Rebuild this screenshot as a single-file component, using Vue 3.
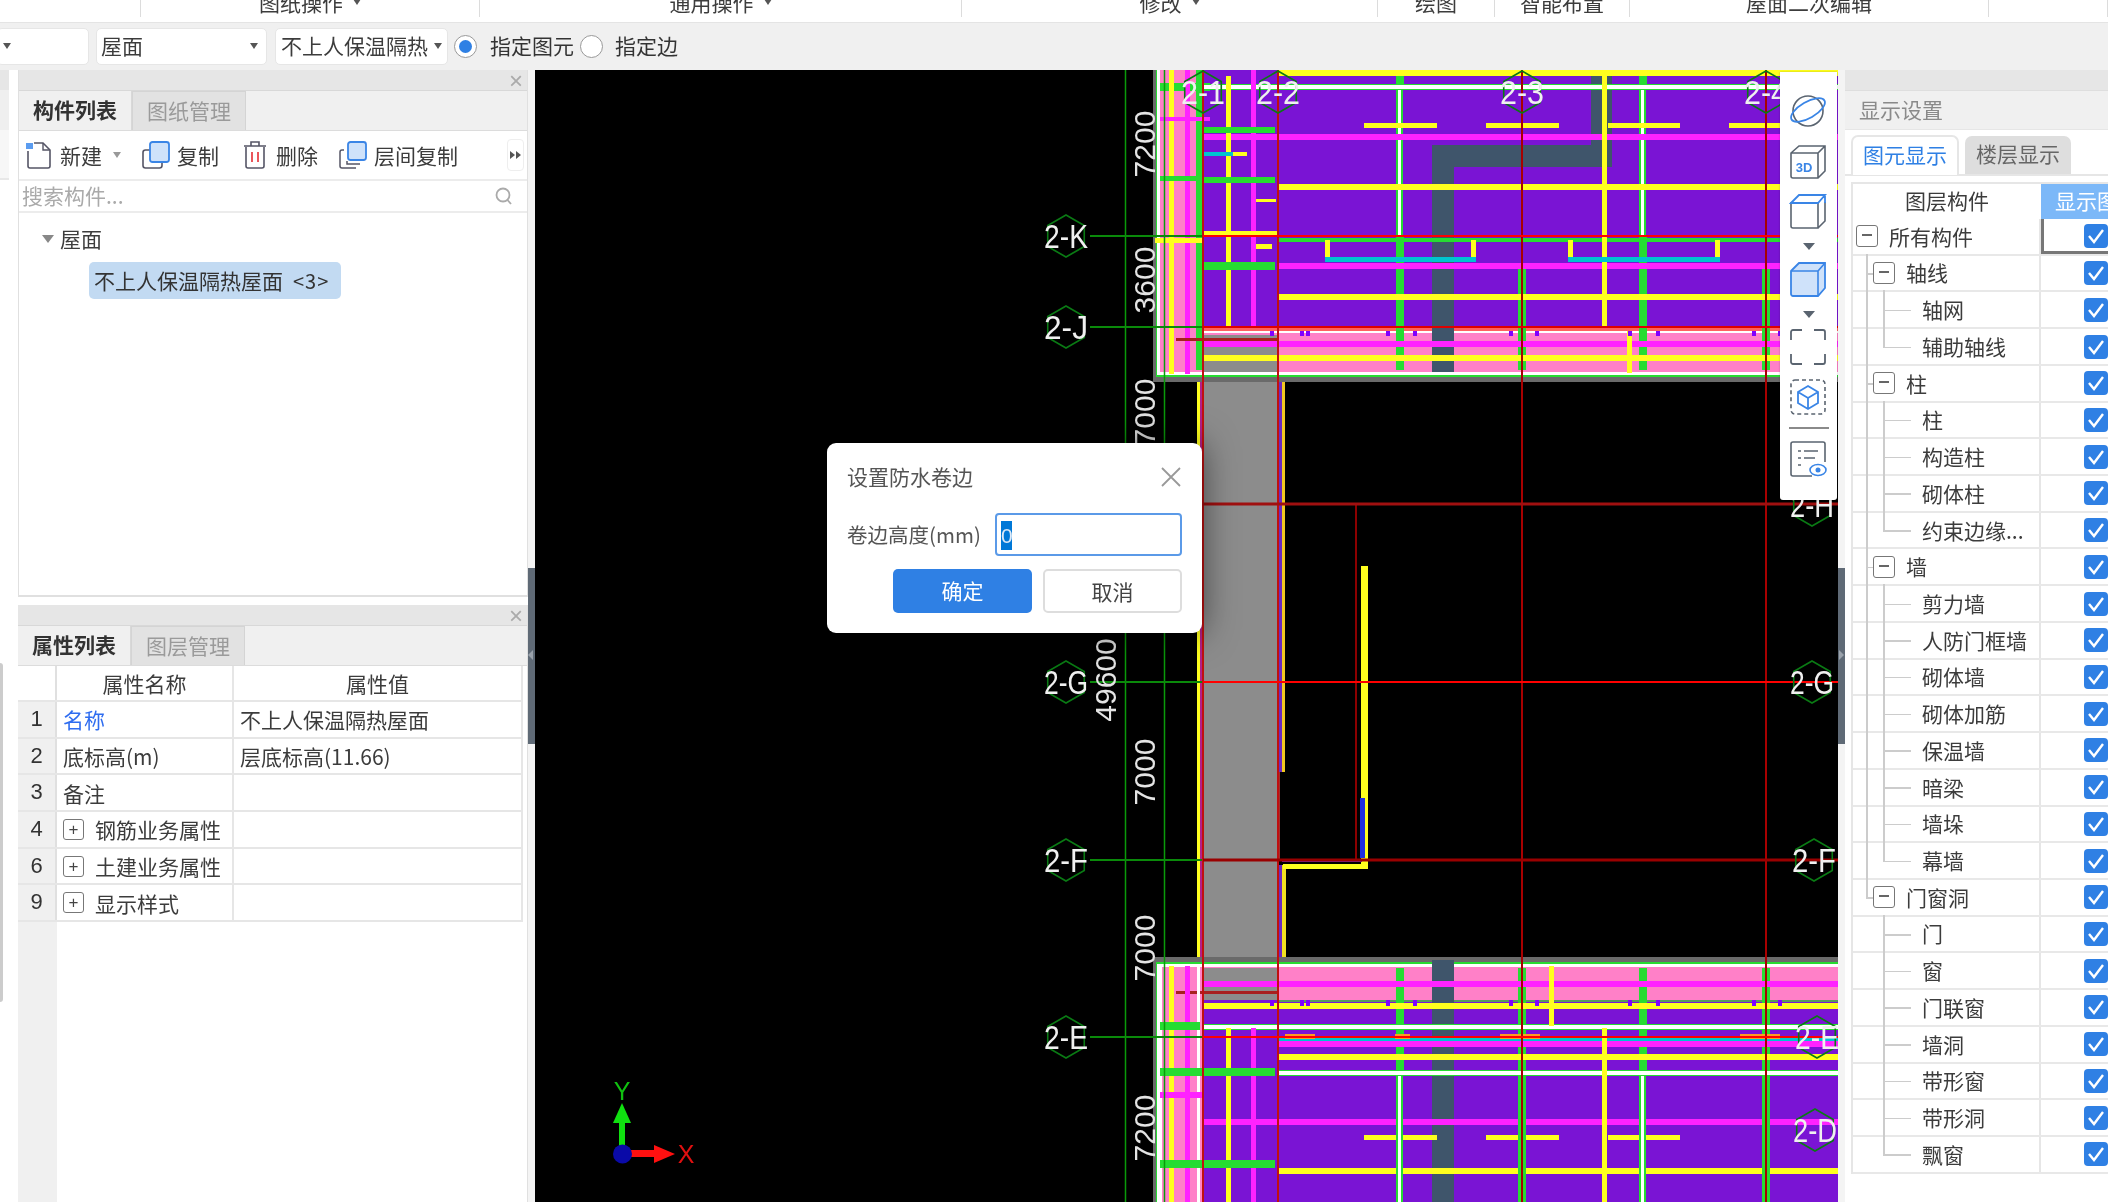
<script setup>
const Y = '#ffff1e', M = '#ff22ff', W = '#ffffff', G = '#26dc32', R = '#d80000', P = '#7a14d4', K = '#ff80c8', S = '#3f556b', A = '#8c8c8c', T = '#00c4d0', V = '#8000ff'

const rects = [
  // grey column between the two blocks
  [1203, 380, 75, 580, A], [1197, 380, 3, 580, Y], [1200, 380, 3, 580, '#b0208c'],
  [1278, 380, 4, 392, '#6a2ac0'], [1282, 380, 3, 392, '#f2c820'], [1278, 772, 2, 88, '#a03030'],
  [1279, 865, 3, 92, '#6a2ac0'], [1282, 865, 4, 92, '#f2e020'],
  // stand-alone wall
  [1355, 504, 2, 356, '#8c0000'], [1361, 566, 7, 300, Y], [1360, 798, 5, 60, '#2030e0'],
  [1283, 864, 85, 5, Y], [1282, 859, 80, 3, '#7030c0'],
  // top block
  [1153, 70, 685, 312, '#6a6a6a'], [1156, 70, 682, 307, G], [1157, 70, 681, 305, W], [1160, 70, 678, 302, K],
  [1203, 70, 635, 257, P], [1278, 70, 560, 6, Y],
  [1203, 327, 635, 4, '#ff6060'], [1203, 331, 635, 2, W], [1203, 335, 75, 37, A],
  [1432, 145, 22, 227, S], [1432, 145, 180, 22, S], [1591, 76, 21, 91, S],
  [1400 - 4, 236, 8, 134, G], [1643 - 4, 236, 8, 134, G], [1396, 76, 8, 10, G], [1639, 76, 8, 10, G],
  [1518, 264, 8, 106, G], [1762, 264, 8, 106, G],
  [1396, 88, 7, 147, G], [1398, 88, 3, 147, W], [1639, 88, 7, 147, G], [1641, 88, 3, 147, W],
  [1160, 83, 50, 8, G], [1203, 84, 635, 6, G], [1203, 85, 635, 4, W],
  [1203, 134, 635, 6, M], [1278, 184, 560, 6, Y], [1278, 294, 560, 6, Y], [1278, 263, 560, 6, M],
  [1203, 341, 635, 6, M], [1203, 355, 635, 6, Y], [1278, 238, 560, 4, G],
  [1602, 76, 5, 252, Y], [1627, 331, 5, 42, Y],
  [1226, 76, 5, 252, Y], [1251, 70, 5, 258, M], [1169, 70, 5, 304, Y], [1185, 70, 5, 304, M], [1196, 70, 7, 300, G],
  [1203, 127, 72, 6, G], [1203, 177, 72, 6, G], [1203, 262, 72, 8, G], [1160, 117, 50, 4, M],
  [1160, 176, 40, 5, G], [1203, 231, 75, 5, Y], [1155, 238, 48, 5, Y], [1203, 152, 30, 4, T], [1233, 152, 14, 4, Y],
  [1256, 199, 20, 3, Y], [1256, 244, 16, 5, Y], [1176, 338, 102, 3, '#a82020'],
  [1364, 123, 73, 5, Y], [1486, 123, 73, 5, Y], [1608, 123, 72, 5, Y], [1729, 123, 60, 5, Y],
  [1325, 257, 151, 5, T], [1568, 257, 152, 5, T],
  [1325, 240, 5, 17, Y], [1471, 240, 5, 17, Y], [1568, 240, 5, 17, Y], [1715, 240, 5, 17, Y],
  // bottom block
  [1153, 957, 685, 245, '#6a6a6a'], [1156, 962, 682, 240, G], [1157, 964, 681, 238, W], [1160, 967, 678, 235, K],
  [1203, 1000, 635, 202, P], [1203, 968, 75, 32, A], [1278, 1000, 560, 2, '#5a9a5a'],
  [1432, 960, 22, 242, S],
  [1396, 968, 8, 104, G], [1639, 968, 8, 104, G], [1518, 968, 8, 104, G], [1762, 968, 8, 104, G],
  [1203, 981, 635, 6, M], [1176, 991, 102, 3, '#a82020'], [1203, 1003, 635, 6, Y],
  [1203, 1024, 635, 6, G], [1203, 1025, 635, 4, W], [1278, 1038, 560, 3, T], [1278, 1041, 560, 6, M],
  [1278, 1054, 560, 6, Y], [1278, 1070, 560, 6, G], [1278, 1071, 560, 4, W],
  [1203, 1119, 635, 6, M], [1278, 1168, 560, 6, Y],
  [1364, 1135, 73, 5, Y], [1486, 1135, 73, 5, Y], [1608, 1135, 72, 5, Y],
  [1396, 1076, 7, 126, G], [1398, 1076, 3, 126, W], [1639, 1076, 7, 126, G], [1641, 1076, 3, 126, W],
  [1518, 1076, 8, 126, G], [1762, 1076, 8, 126, G],
  [1602, 1028, 5, 174, Y], [1549, 966, 5, 60, Y], [1226, 1028, 5, 174, Y], [1251, 1028, 5, 174, M],
  [1169, 966, 5, 236, Y], [1185, 966, 5, 236, M], [1159, 964, 3, 238, W], [1197, 964, 3, 238, W],
  [1160, 1022, 40, 8, G], [1160, 1068, 115, 8, G], [1160, 1160, 115, 8, G], [1160, 1092, 44, 6, M],
  [1285, 1034, 30, 5, '#ff9a20'], [1500, 1034, 40, 5, '#ff9a20'], [1395, 1034, 15, 5, '#ff9a20'], [1740, 1034, 40, 5, '#ff9a20']
]

const marks = [1270, 1300, 1306, 1386, 1413, 1509, 1535, 1628, 1656, 1752, 1778]

const axesV = [
  { x: 1203, c: '#c01010' }, { x: 1278, c: '#c01010' }, { x: 1522, c: '#a80000' }, { x: 1766, c: '#a80000' }
]
const axesH = [
  { y: 236, c: '#ff0000', w: 2 }, { y: 327, c: '#e00000', w: 2 }, { y: 504, c: '#a01010', w: 3 },
  { y: 682, c: '#ff0000', w: 2 }, { y: 860, c: '#9a0000', w: 3 }, { y: 1037, c: '#ff0000', w: 2 }
]
const greens = [236, 327, 504, 682, 860, 1037]

const bubbles = [
  { x: 1203, y: 92, t: '2-1' }, { x: 1278, y: 92, t: '2-2' }, { x: 1522, y: 92, t: '2-3' }, { x: 1766, y: 92, t: '2-4' },
  { x: 1066, y: 236, t: '2-K' }, { x: 1066, y: 327, t: '2-J' }, { x: 1066, y: 682, t: '2-G' }, { x: 1066, y: 860, t: '2-F' }, { x: 1066, y: 1037, t: '2-E' },
  { x: 1812, y: 505, t: '2-H' }, { x: 1812, y: 682, t: '2-G' }, { x: 1814, y: 860, t: '2-F' }, { x: 1817, y: 1037, t: '2-E' }, { x: 1815, y: 1130, t: '2-D' }
]
const hex = (b) => {
  const r = 21
  return [[0, -r], [r * 0.87, -r / 2], [r * 0.87, r / 2], [0, r], [-r * 0.87, r / 2], [-r * 0.87, -r / 2]]
    .map(([a, c]) => `${b.x + a},${b.y + c}`).join(' ')
}
const dims = [
  { x: 1145, y: 144, t: '7200' }, { x: 1145, y: 280, t: '3600' }, { x: 1145, y: 412, t: '7000' },
  { x: 1106, y: 680, t: '49600' }, { x: 1145, y: 772, t: '7000' }, { x: 1145, y: 948, t: '7000' }, { x: 1145, y: 1128, t: '7200' }
]

const ribbon = [
  { w: 141, t: '' }, { w: 339, t: '图纸操作', a: true }, { w: 482, t: '通用操作', a: true }, { w: 416, t: '修改', a: true },
  { w: 117, t: '绘图' }, { w: 135, t: '智能布置' }, { w: 359, t: '屋面二次编辑' }, { w: 119, t: '' }
]

const props = [
  { n: 1, name: '名称', val: '不上人保温隔热屋面', link: true },
  { n: 2, name: '底标高(m)', val: '层底标高(11.66)' },
  { n: 3, name: '备注', val: '' },
  { n: 4, name: '钢筋业务属性', val: '', exp: true },
  { n: 6, name: '土建业务属性', val: '', exp: true },
  { n: 9, name: '显示样式', val: '', exp: true }
]

const raw = [
  [0, '所有构件'], [1, '轴线'], [2, '轴网'], [2, '辅助轴线'], [1, '柱'], [2, '柱'], [2, '构造柱'], [2, '砌体柱'], [2, '约束边缘...'],
  [1, '墙'], [2, '剪力墙'], [2, '人防门框墙'], [2, '砌体墙'], [2, '砌体加筋'], [2, '保温墙'], [2, '暗梁'], [2, '墙垛'], [2, '幕墙'],
  [1, '门窗洞'], [2, '门'], [2, '窗'], [2, '门联窗'], [2, '墙洞'], [2, '带形窗'], [2, '带形洞'], [2, '飘窗']
]
const layers = raw.map(([level, text], i) => {
  const next = raw[i + 1]
  return {
    level, text, i,
    lastLeaf: level === 2 && (!next || next[0] !== 2),
    trunk: i > 0 && i <= 18,
    trunkEnd: i === 18
  }
})
</script>

<template>
  <div class="app">
    <div class="ribbon">
      <div v-for="(g, i) in ribbon" :key="i" class="rgroup" :style="{ width: g.w + 'px' }">
        <span v-if="g.t" class="rlabel">{{ g.t }}<i v-if="g.a" class="caret rcaret"></i></span>
      </div>
    </div>

    <div class="optbar">
      <div class="select s0"><i class="caret"></i></div>
      <div class="select s1"><span>屋面</span><i class="caret"></i></div>
      <div class="select s2"><span>不上人保温隔热</span><i class="caret"></i></div>
      <span class="radio on"></span><span class="rtext">指定图元</span>
      <span class="radio"></span><span class="rtext r2">指定边</span>
    </div>

    <div class="main">
      <div class="stub">
        <div class="stub-top"></div>
        <div class="stub-mid"></div>
        <div class="stub-bar"></div>
      </div>

      <aside class="left">
        <section class="panel top">
          <div class="ptitle"><span class="px">×</span></div>
          <div class="ptabs">
            <span class="ptab active">构件列表</span><span class="ptab">图纸管理</span>
          </div>
          <div class="tools">
            <svg class="ti i-new" width="28" height="28" viewBox="0 0 28 28">
              <path d="M3 10v15a2 2 0 0 0 2 2h18a2 2 0 0 0 2-2V9l-7-7H9" fill="none" stroke="#556" stroke-width="1.6"/>
              <path d="M18 2v7h7" fill="none" stroke="#556" stroke-width="1.4"/>
              <path d="M1 2h7v6H1z" fill="#5b9cf0"/>
            </svg>
            <span class="tt">新建</span><i class="caret tc"></i>
            <svg class="ti i-copy" width="28" height="28" viewBox="0 0 28 28">
              <rect x="1" y="9" width="19" height="18" rx="2.5" fill="none" stroke="#556" stroke-width="1.6"/>
              <rect x="8" y="1" width="19" height="20" rx="2.5" fill="#cfe2fa" stroke="#3a85e6" stroke-width="1.8"/>
            </svg>
            <span class="tt">复制</span>
            <svg class="ti i-del" width="24" height="28" viewBox="0 0 24 28">
              <path d="M3 6v19a2 2 0 0 0 2 2h14a2 2 0 0 0 2-2V6M1 5h22M8 5V1h8v4" fill="none" stroke="#556" stroke-width="1.6"/>
              <path d="M9 11v10M15 11v10" stroke="#e8454a" stroke-width="1.8"/>
            </svg>
            <span class="tt">删除</span>
            <svg class="ti i-lay" width="28" height="28" viewBox="0 0 28 28">
              <path d="M5 9H3a2 2 0 0 0-2 2v14a2 2 0 0 0 2 2h14M8 20v3h13" fill="none" stroke="#556" stroke-width="1.5"/>
              <rect x="9" y="1" width="18" height="18" rx="2.5" fill="#cfe2fa" stroke="#3a85e6" stroke-width="1.8"/>
            </svg>
            <span class="tt">层间复制</span>
            <span class="more"><i></i><i></i></span>
          </div>
          <div class="search">
            <span>搜索构件...</span>
            <svg width="18" height="20" viewBox="0 0 18 20">
              <circle cx="8" cy="9" r="6.5" fill="none" stroke="#aaa" stroke-width="1.8"/>
              <path d="M12.5 14l3.5 4" stroke="#aaa" stroke-width="1.8"/>
            </svg>
          </div>
          <div class="tree">
            <div class="troot"><i class="tarrow"></i><span>屋面</span></div>
            <div class="titem">不上人保温隔热屋面<span class="cnt">&lt;3&gt;</span></div>
          </div>
        </section>

        <section class="panel bottom">
          <div class="ptitle"><span class="px">×</span></div>
          <div class="ptabs">
            <span class="ptab active">属性列表</span><span class="ptab">图层管理</span>
          </div>
          <div class="ptable">
            <div class="prow phead">
              <span class="pnum hnum"></span><span class="pname">属性名称</span><span class="pval">属性值</span>
            </div>
            <div v-for="p in props" :key="p.n" class="prow">
              <span class="pnum">{{ p.n }}</span>
              <span class="pname" :class="{ link: p.link }">
                <i v-if="p.exp" class="pbox">+</i>{{ p.name }}
              </span>
              <span class="pval">{{ p.val }}</span>
            </div>
            <div class="pfill"></div>
          </div>
        </section>
      </aside>

      <div class="split"><span class="grip gl"></span></div>

      <div class="canvas">
        <svg class="draw" width="1303" height="1132" viewBox="535 70 1303 1132">
          <line x1="1125.5" y1="70" x2="1125.5" y2="1202" stroke="#0a9a0a" stroke-width="1.5"/>
          <rect v-for="(r, i) in rects" :key="i" :x="r[0]" :y="r[1]" :width="r[2]" :height="r[3]" :fill="r[4]"/>
          <line x1="1164.5" y1="70" x2="1164.5" y2="1202" stroke="#0a9a0a" stroke-width="1.5"/>
          <line v-for="y in greens" :key="'g' + y" x1="1090" :y1="y" x2="1203" :y2="y" stroke="#0a8a0a" stroke-width="2"/>
          <rect v-for="x in marks" :key="'m' + x" :x="x" y="331" width="4" height="5" :fill="V"/>
          <rect v-for="x in marks" :key="'n' + x" :x="x" y="1000" width="4" height="6" :fill="V"/>
          <line v-for="a in axesV" :key="a.x" :x1="a.x" y1="70" :x2="a.x" y2="1202" :stroke="a.c" stroke-width="2"/>
          <line v-for="a in axesH" :key="a.y" x1="1203" :y1="a.y" x2="1838" :y2="a.y" :stroke="a.c" :stroke-width="a.w"/>
          <polygon v-for="(b, i) in bubbles" :key="'h' + i" :points="hex(b)" fill="none" stroke="#0a7a14" stroke-width="1.6"/>
          <text v-for="(b, i) in bubbles" :key="'t' + i" :x="b.x" :y="b.y + 12" class="bub" text-anchor="middle" textLength="44" lengthAdjust="spacingAndGlyphs">{{ b.t }}</text>
          <text v-for="(d, i) in dims" :key="'d' + i" class="dim" text-anchor="middle" :transform="`translate(${d.x + 10} ${d.y}) rotate(-90)`">{{ d.t }}</text>
          <!-- origin gizmo -->
          <rect x="619" y="1112" width="6" height="36" fill="#10e010"/>
          <polygon points="622,1103 613,1123 631,1123" fill="#10e010"/>
          <rect x="628" y="1150" width="28" height="7" fill="#ff1010"/>
          <polygon points="675,1154 654,1145 654,1163" fill="#ff1010"/>
          <circle cx="622.500" cy="1154" r="9.500" fill="#0a0aa8"/>
          <text x="622" y="1100" class="axl" fill="#10c010" text-anchor="middle">Y</text>
          <text x="686" y="1163" class="axl" fill="#e01010" text-anchor="middle">X</text>
        </svg>

        <div class="ftools">
          <svg width="36" height="36" viewBox="0 0 36 36">
            <circle cx="18" cy="18" r="15" fill="none" stroke="#5a6470" stroke-width="1.6"/>
            <ellipse cx="18" cy="17" rx="19" ry="8" transform="rotate(-30 18 17)" fill="none" stroke="#3a85e6" stroke-width="1.8"/>
          </svg>
          <svg width="36" height="36" viewBox="0 0 36 36">
            <path d="M1 10l8-7h26v25l-7 7H3a2 2 0 0 1-2-2zM1 10h27v25M28 10l7-7" fill="none" stroke="#5a6470" stroke-width="1.6"/>
            <text x="14" y="29" class="t3d">3D</text>
          </svg>
          <svg width="36" height="36" viewBox="0 0 36 36">
            <path d="M1 10h27v25H3a2 2 0 0 1-2-2zM28 35l7-7V9" fill="none" stroke="#5a6470" stroke-width="1.6"/>
            <path d="M1 10l8-8h26l-7 8zM35 3v7" fill="none" stroke="#3a85e6" stroke-width="1.8"/>
          </svg>
          <i class="caret fc"></i>
          <svg width="36" height="36" viewBox="0 0 36 36">
            <path d="M1 10l8-8h26v25l-7 8H3a2 2 0 0 1-2-2z" fill="#cfe2fa" stroke="#3a85e6" stroke-width="1.8"/>
            <path d="M1 10h27v25M28 10l7-8" fill="none" stroke="#3a85e6" stroke-width="1.6"/>
          </svg>
          <i class="caret fc"></i>
          <svg width="36" height="36" viewBox="0 0 36 36">
            <path d="M1 11V3a2 2 0 0 1 2-2h9M24 1h9a2 2 0 0 1 2 2v8M35 25v8a2 2 0 0 1-2 2h-9M12 35H3a2 2 0 0 1-2-2v-8" fill="none" stroke="#5a6470" stroke-width="1.8"/>
          </svg>
          <svg width="36" height="36" viewBox="0 0 36 36">
            <rect x="1" y="1" width="34" height="34" rx="4" fill="none" stroke="#5a6470" stroke-width="1.6" stroke-dasharray="4 3"/>
            <path d="M18 7l10 6v11l-10 6-10-6V13zM8 13l10 6 10-6M18 19v11" fill="none" stroke="#3a85e6" stroke-width="1.8"/>
          </svg>
          <span class="fsep"></span>
          <svg width="36" height="36" viewBox="0 0 36 36">
            <path d="M22 35H3a2 2 0 0 1-2-2V3a2 2 0 0 1 2-2h30a2 2 0 0 1 2 2v18" fill="none" stroke="#5a6470" stroke-width="1.6"/>
            <path d="M8 10h3M14 10h14M8 17h3M14 17h11M8 24h3" stroke="#5a6470" stroke-width="1.6"/>
            <ellipse cx="28" cy="29" rx="8" ry="5.500" fill="#fff" stroke="#3a85e6" stroke-width="1.6"/>
            <circle cx="28" cy="29" r="2.500" fill="#3a85e6"/>
          </svg>
        </div>
      </div>

      <div class="split r"><span class="grip gr"></span></div>

      <aside class="right">
        <div class="ptitle rt"></div>
        <div class="rhead">显示设置</div>
        <div class="rtabs">
          <span class="rtab active">图元显示</span><span class="rtab">楼层显示</span>
        </div>
        <div class="ltable">
          <div class="lhead"><span class="lh1">图层构件</span><span class="lh2">显示图元</span></div>
          <div v-for="l in layers" :key="l.i" class="lrow">
            <div class="lname" :class="'lv' + l.level">
              <span v-if="l.trunk" class="g0" :class="{ end: l.trunkEnd }"></span>
              <span v-if="l.level === 1" class="tick1"></span>
              <span v-if="l.level === 2" class="g1" :class="{ end: l.lastLeaf }"></span>
              <span v-if="l.level === 2" class="tick2"></span>
              <i v-if="l.level < 2" class="minus"></i>
              <span class="ltext">{{ l.text }}</span>
            </div>
            <div class="lchk" :class="{ focus: l.i === 0 }">
              <span class="chk">
                <svg width="24" height="24" viewBox="0 0 24 24"><path d="M5 12l5 6 9-12" fill="none" stroke="#fff" stroke-width="2.400"/></svg>
              </span>
            </div>
          </div>
        </div>
      </aside>
    </div>

    <div class="dialog">
      <div class="dtitle">
        <span>设置防水卷边</span>
        <svg width="20" height="20" viewBox="0 0 20 20"><path d="M1 1l18 18M19 1L1 19" stroke="#999" stroke-width="1.800"/></svg>
      </div>
      <div class="dfield">
        <label>卷边高度(mm)</label>
        <div class="dinput"><span class="dsel">0</span></div>
      </div>
      <div class="dbtns">
        <span class="btn ok">确定</span><span class="btn cancel">取消</span>
      </div>
    </div>
  </div>
</template>

<style>
html, body { margin: 0; background: #fff; overflow: hidden; }
</style>

<style scoped>
.app {
  position: relative; width: 2108px; height: 1202px; overflow: hidden; background: #f4f4f4;
  display: flex; flex-direction: column; color: #3c3c3c;
  font: 21px/1.2 "Noto Sans CJK SC", "Noto Sans", sans-serif;
  filter: blur(0.45px);
}
.ribbon { height: 23px; background: #fff; display: flex; overflow: hidden; flex: none; border-bottom: 1px solid #e4e4e4; box-sizing: border-box; }
.rgroup { height: 17px; box-sizing: border-box; border-right: 1px solid #dcdcdc; display: flex; justify-content: center; align-items: flex-end; flex: none; }
.rlabel { line-height: 21px; height: 10px; display: flex; align-items: flex-end; transform: translateY(-4px); }
.caret { display: block; width: 0; height: 0; border: 4.500px solid transparent; border-top: 6px solid #555; border-bottom: 0; flex: none; }
.rcaret { margin: 0 0 8px 10px; }
.optbar { height: 47px; flex: none; display: flex; align-items: center; padding-bottom: 1px; box-sizing: border-box; background: #f0f0f0; }
.select { height: 37px; background: #fff; border: 1px solid #e6e6e6; border-radius: 5px; box-sizing: border-box; display: flex; align-items: center; justify-content: space-between; padding: 0 8px 0 5px; flex: none; }
.s0 { width: 92px; margin-left: -3px; }
.s1 { width: 171px; margin-left: 7px; padding-left: 4px; }
.s2 { width: 173px; margin-left: 8px; padding-right: 5px; }
.radio { width: 23px; height: 23px; border-radius: 50%; border: 1.500px solid #999; box-sizing: border-box; background: #fff; flex: none; position: relative; margin-left: 6px; }
.radio.on::after { content: ""; position: absolute; inset: 4px; border-radius: 50%; background: #2f80e4; }
.rtext { margin-left: 13px; color: #333; width: 85px; white-space: nowrap; flex: none; }
.r2 { margin-left: 12px; }
.radio:not(.on) { margin-left: 5px; }

.main { flex: 1; display: flex; min-height: 0; background: #fff; }
.stub { width: 9px; flex: none; margin-right: 9px; position: relative; }
.stub-top { height: 60px; background: linear-gradient(#e6e6e6 0 20px, #efefef 20px); }
.stub-mid { height: 48px; background: #f7f7f7; border-bottom: 2px solid #e8e8e8; }
.stub-bar { position: absolute; left: 0; top: 593px; bottom: 200px; width: 3px; background: #ccc; border-radius: 0 3px 3px 0; }

.left { width: 510px; flex: none; display: flex; flex-direction: column; gap: 8px; }
.panel { display: flex; flex-direction: column; background: #fff; border-right: 1.500px solid #e0e0e0; box-sizing: border-box; }
.panel.top { height: 527px; border-left: 1.500px solid #e0e0e0; border-bottom: 2px solid #e0e0e0; }
.panel.bottom { flex: 1; min-height: 0; }
.ptitle { height: 21px; flex: none; background: #e6e6e6; position: relative; border-bottom: 1px solid #d8d8d8; box-sizing: border-box; }
.px { position: absolute; right: 4px; top: -3px; color: #aaa; font: 24px/28px "Liberation Sans", sans-serif; }
.ptabs { height: 40px; flex: none; background: #f0f0f0; display: flex; border-bottom: 1px solid #dcdcdc; box-sizing: border-box; }
.ptab { width: 114px; text-align: center; line-height: 36px; color: #9a9a9a; background: #e2e2e2; border: 1px solid #d4d4d4; border-bottom: 0; box-sizing: border-box; }
.ptab.active { color: #333; background: #f0f0f0; font-weight: 700; border: 0; border-right: 1px solid #d8d8d8; width: 113px; line-height: 37px; }

.tools { height: 50px; flex: none; display: flex; align-items: center; border-bottom: 2px solid #ececec; box-sizing: border-box; position: relative; }
.tt { white-space: nowrap; color: #3c3c3c; position: relative; top: 1px; }
.ti { flex: none; }
.i-new { margin: 0 7px 0 6px; }
.tc { margin: 0 0 0 11px; border-top-color: #999; }
.i-copy { margin: 0 7px 0 21px; }
.i-del { margin: 0 9px 0 24px; }
.i-lay { margin: 0 7px 0 21px; }
.more { position: absolute; right: 3px; top: 8px; width: 17px; height: 32px; border: 1px solid #eee; border-radius: 4px; box-sizing: border-box; display: flex; align-items: center; justify-content: center; gap: 1px; }
.more i { width: 0; height: 0; border: 4px solid transparent; border-left: 5px solid #555; border-right: 0; }
.search { height: 32px; flex: none; display: flex; justify-content: space-between; align-items: center; padding: 0 14px 0 3px; color: #aaa; border-bottom: 2px solid #ececec; box-sizing: border-box; }
.tree { flex: 1; padding: 8px 0 0; position: relative; }
.troot { height: 36px; display: flex; align-items: center; padding-left: 23px; gap: 6px; }
.tarrow { width: 0; height: 0; border: 6px solid transparent; border-top: 8px solid #888; border-bottom: 0; }
.titem { margin: 5px 0 0 70px; width: 252px; height: 37px; line-height: 37px; background: #c2daf2; border-radius: 5px; padding-left: 5px; box-sizing: border-box; white-space: nowrap; color: #333; }
.cnt { margin-left: 10px; font-size: 20px; letter-spacing: 1px; }

.ptable { flex: 1; display: flex; flex-direction: column; min-height: 0; width: 505px; }
.prow { height: 36.700px; flex: none; display: grid; grid-template-columns: 39px 177px 1fr; box-sizing: border-box; border-bottom: 2px solid #e6e6e6; line-height: 34px; white-space: nowrap; }
.pnum { background: #f0f0f0; text-align: center; border-right: 2px solid #e0e0e0; color: #333; box-sizing: border-box; font-family: "Liberation Sans", sans-serif; font-size: 22px; }
.hnum { background: #fff; }
.pname { padding-left: 6px; border-right: 2px solid #e6e6e6; display: flex; align-items: center; box-sizing: border-box; }
.pval { padding-left: 6px; border-right: 2px solid #e6e6e6; box-sizing: border-box; }
.phead { text-align: center; height: 36px; background: #fff; }
.phead .pname { justify-content: center; padding-left: 0; }
.phead .pval { padding-left: 0; }
.link { color: #2f6df0; }
.pbox { width: 21px; height: 21px; border: 1.500px solid #777; border-radius: 3px; box-sizing: border-box; display: flex; align-items: center; justify-content: center; font: 17px/1 "Liberation Sans", sans-serif; margin-right: 11px; color: #444; }
.pfill { flex: 1; width: 39px; background: #f0f0f0; }

.split { width: 7px; flex: none; background: #f4f4f4; position: relative; }
.grip { position: absolute; left: 0; right: 0; top: 498px; height: 176px; background: #5f6a76; }
.gl::after, .gr::after { content: ""; position: absolute; top: 82px; width: 0; height: 0; border: 5px solid transparent; }
.gl::after { left: 0; border-right: 5px solid #9aa2ab; border-left: 0; }
.gr::after { left: 1px; border-left: 5px solid #9aa2ab; border-right: 0; }

.canvas { width: 1303px; flex: none; background: #000; position: relative; overflow: hidden; }
.draw { display: block; }
.bub { fill: #f0f0f0; font: 34px "Liberation Sans", sans-serif; }
.dim { fill: #e4e4e4; font: 30px "Liberation Sans", sans-serif; }
.axl { font: 25px "Liberation Sans", sans-serif; }
.t3d { fill: #3a85e6; font: 700 13px "Liberation Sans", sans-serif; text-anchor: middle; }
.ftools { position: absolute; left: 1245px; top: 2px; width: 57px; height: 428px; background: #fff; border-radius: 0 0 3px 3px; box-shadow: 0 0 2px rgba(0,0,0,.3); display: flex; flex-direction: column; align-items: center; padding-top: 21px; box-sizing: border-box; }
.ftools svg { flex: none; overflow: visible; margin-left: -2px; }
.ftools svg + svg { margin-top: 14px; }
.fc { margin: 14px 0 11px; border-width: 6px; border-top: 7px solid #5a6470; border-bottom: 0; }
.fsep { width: 40px; height: 2px; background: #8a8a8a; margin: 12px 0 12px; flex: none; }

.right { flex: 1; min-width: 0; background: #fff; overflow: hidden; }
.rt { border-bottom: 1px solid #dedede; }
.rhead { height: 39px; background: #f0f0f0; color: #8a8a8a; line-height: 36px; padding-left: 14px; border-bottom: 1px solid #e6e6e6; box-sizing: border-box; }
.rtabs { height: 46px; padding: 6px 0 0 6px; display: flex; gap: 6px; box-sizing: border-box; border-bottom: 2px solid #e6e6e6; }
.rtab { width: 106px; height: 38px; line-height: 35px; text-align: center; color: #666; background: #dedede; border-radius: 7px 7px 0 0; }
.rtab.active { color: #2f80e4; background: #fff; border: 2px solid #e6e6e6; border-bottom: 0; box-sizing: content-box; width: 104px; height: 38px; margin-top: -1px; }
.ltable { margin: 6px 0 0 6px; border-left: 2px solid #e6e6e6; }
.lhead { display: grid; grid-template-columns: 188px 1fr; height: 37px; line-height: 32px; border-top: 2px solid #e6e6e6; box-sizing: border-box; }
.lh1 { text-align: center; }
.lh2 { background: #7cb8f8; color: #fff; padding-left: 14px; white-space: nowrap; overflow: hidden; }
.lrow { display: grid; grid-template-columns: 188px 1fr; height: 36.720px; box-sizing: border-box; border-bottom: 2px solid #e8e8e8; }
.lname { position: relative; display: flex; align-items: center; border-right: 2px solid #e6e6e6; box-sizing: border-box; white-space: nowrap; }
.lv0 { padding-left: 3px; } .lv1 { padding-left: 20px; } .lv2 { padding-left: 69px; }
.minus { width: 22px; height: 22px; border: 1.500px solid #777; border-radius: 3px; box-sizing: border-box; background: #fff; margin-right: 11px; position: relative; flex: none; z-index: 1; }
.minus::after { content: ""; position: absolute; left: 5px; right: 5px; top: 8px; height: 2px; background: #666; }
.ltext { position: relative; z-index: 1; }
.g0, .g1 { position: absolute; top: -2px; bottom: -2px; width: 1.500px; background: #ccc; }
.g0 { left: 13px; } .g1 { left: 30px; }
.g0.end, .g1.end { bottom: 50%; }
.tick1, .tick2 { position: absolute; top: 50%; height: 1.500px; background: #ccc; }
.tick1 { left: 13px; width: 8px; } .tick2 { left: 30px; width: 28px; }
.lchk { position: relative; padding-left: 43px; display: flex; align-items: center; box-sizing: border-box; }
.lchk.focus { box-shadow: inset 3px -3px 0 #777; }
.chk { width: 24px; height: 24px; background: #2f80e4; border-radius: 4px; flex: none; display: block; }
.chk svg { display: block; }

.dialog { position: absolute; left: 827px; top: 443px; width: 375px; height: 190px; background: #fff; border-radius: 9px; box-shadow: 0 0 34px rgba(0,0,0,.55); padding: 20px 20px 0; box-sizing: border-box; color: #555; }
.dtitle { display: flex; justify-content: space-between; align-items: center; height: 28px; padding-right: 1px; }
.dtitle span { font-size: 21px; }
.dfield { display: flex; align-items: center; margin-top: 22px; justify-content: space-between; }
.dfield label { font-size: 20.500px; white-space: nowrap; }
.dinput { width: 187px; height: 43px; border: 2px solid #5b9ae8; border-radius: 4px; box-sizing: border-box; padding: 6px 4px; }
.dsel { display: block; width: 11px; height: 29px; background: #0078d7; color: #dce9f7; font: 21px/29px "Liberation Sans", sans-serif; }
.dbtns { display: flex; justify-content: flex-end; gap: 11px; margin-top: 13px; }
.btn { width: 139px; height: 44px; line-height: 40px; text-align: center; border-radius: 5px; box-sizing: border-box; }
.ok { background: #2f80e4; color: #fff; line-height: 42px; }
.cancel { border: 2px solid #ddd; color: #444; }
</style>
